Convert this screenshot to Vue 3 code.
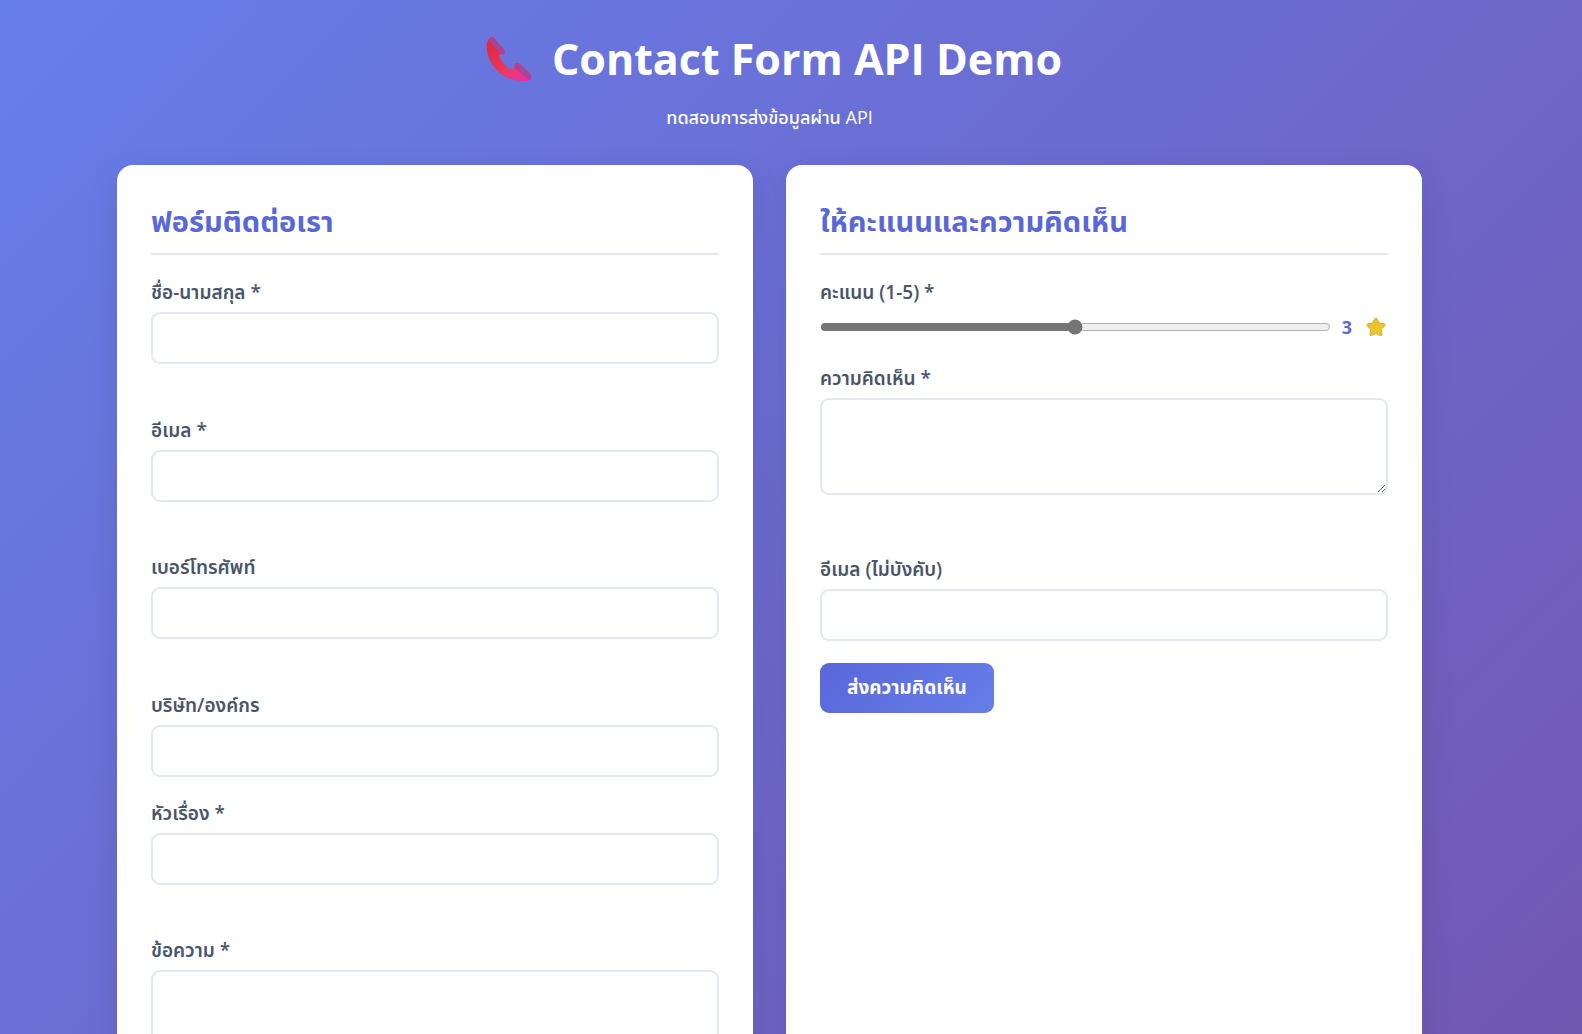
<script setup>
import { ref } from 'vue'

const rating = ref(3)
const contactFields = [
  { id: 'name', label: 'ชื่อ-นามสกุล *', type: 'text', error: true },
  { id: 'email', label: 'อีเมล *', type: 'email', error: true },
  { id: 'phone', label: 'เบอร์โทรศัพท์', type: 'tel', error: true },
  { id: 'company', label: 'บริษัท/องค์กร', type: 'text', error: false },
  { id: 'subject', label: 'หัวเรื่อง *', type: 'text', error: true },
]
</script>

<template>
  <div class="page">
    <div class="container">
      <header class="header">
        <h1>
          <svg class="phone" viewBox="0 0 46 46" aria-hidden="true">
            <defs>
              <linearGradient id="handle" x1="0" y1="0" x2="1" y2="1">
                <stop offset="0" stop-color="#d92c3c" />
                <stop offset="0.25" stop-color="#e62c46" />
                <stop offset="0.6" stop-color="#ea3a68" />
                <stop offset="1" stop-color="#f02aa8" />
              </linearGradient>
              <linearGradient id="cap" x1="0" y1="0" x2="1" y2="1">
                <stop offset="0" stop-color="#c03a86" />
                <stop offset="0.5" stop-color="#9a4a9c" />
                <stop offset="1" stop-color="#c23c92" />
              </linearGradient>
            </defs>
            <path fill="url(#handle)" d="M4 2C1 4 0 9 1 15C3 26 10 36 20 41C28 45 40 46 44 44C46 42 45 40 43 38L35 30C32 27 30 28 28 31C26 34 24 34 21 31C18 28 15 24 13 20C13 18 15 19 17 18C19 17 19 15 17 13L8 2C7 1 5 1 4 2Z" />
            <path fill="url(#cap)" d="M4 2C6 0 7 1 9 3L17 12C19 14 20 16 18 18C16 19 14 18 12 15L5 7C3 4 3 3 4 2Z" />
            <path fill="url(#cap)" d="M29 28C31 26 33 27 35 29L43 36C46 39 46 42 44 44C42 44 40 42 38 40L30 33C28 31 28 29 29 28Z" />
          </svg>
          <span>Contact Form API Demo</span>
        </h1>
        <p>ทดสอบการส่งข้อมูลผ่าน API</p>
      </header>

      <main class="cards">
        <section class="card">
          <h2>ฟอร์มติดต่อเรา</h2>
          <form @submit.prevent>
            <div v-for="f in contactFields" :key="f.id" class="group">
              <label :for="f.id">{{ f.label }}</label>
              <input :id="f.id" class="control" :type="f.type" />
              <div v-if="f.error" class="error"></div>
            </div>
            <div class="group">
              <label for="message">ข้อความ *</label>
              <textarea id="message" class="control message"></textarea>
            </div>
          </form>
        </section>

        <section class="card">
          <h2>ให้คะแนนและความคิดเห็น</h2>
          <form @submit.prevent>
            <div class="group">
              <label for="rating">คะแนน (1-5) *</label>
              <div class="rating">
                <input id="rating" v-model="rating" class="range" type="range" min="1" max="5" />
                <output for="rating">{{ rating }}</output>
                <svg class="star" viewBox="0 0 20 20" aria-hidden="true">
                  <defs>
                    <linearGradient id="gold" x1="0" y1="0" x2="1" y2="1">
                      <stop offset="0" stop-color="#e9b93a" />
                      <stop offset="0.5" stop-color="#ebc334" />
                      <stop offset="1" stop-color="#f5cb1c" />
                    </linearGradient>
                  </defs>
                  <path fill="url(#gold)" stroke="#e0ac30" stroke-width="1" stroke-linejoin="round" d="M8.600 1.800Q10 .2 11.200 1.800L13.200 6L18 6.800Q19.800 7.500 18.600 9L15.300 12.300L16 17.200Q16 19.200 14.200 18.600L9.900 16.400L5.600 18.600Q3.800 19 4 17.200L4.700 12.300L1.300 9Q.2 7.400 2 6.800L6.600 6Z" />
                </svg>
              </div>
            </div>
            <div class="group">
              <label for="comment">ความคิดเห็น *</label>
              <textarea id="comment" class="control comment"></textarea>
              <div class="error"></div>
            </div>
            <div class="group">
              <label for="feedback-email">อีเมล (ไม่บังคับ)</label>
              <input id="feedback-email" class="control" type="email" />
            </div>
            <button class="submit" type="submit">ส่งความคิดเห็น</button>
          </form>
        </section>
      </main>
    </div>
  </div>
</template>

<style>
body {
  margin: 0;
}
</style>

<style scoped>
* {
  box-sizing: border-box;
}
.page {
  min-height: 178vh;
  padding: 22px 65px 22px 22px;
  background: linear-gradient(135deg, #667eea 0%, #764ba2 100%);
  font-family: "Open Sans", "Noto Sans Thai", sans-serif;
  font-size: 18px;
  line-height: 1.6;
  color: #4a5568;
}
.container {
  max-width: 1305px;
  margin: 0 auto;
}
.header {
  display: flex;
  flex-direction: column;
  align-items: center;
  height: 143px;
  color: #fff;
}
h1 {
  display: flex;
  align-items: center;
  gap: 20px;
  margin: 0 0 8px;
  font-size: 43px;
  line-height: 73px;
}
.phone {
  width: 55px;
  height: 46px;
  padding-left: 9px;
}
.header p {
  margin: 0;
  line-height: 28px;
  font-weight: 500;
}
.cards {
  display: grid;
  grid-template-columns: 1fr 1fr;
  gap: 33px;
}
.card {
  padding: 34px;
  border-radius: 16px;
  background: #fff;
  box-shadow: 0 11px 33px rgba(0, 0, 0, 0.1);
}
h2 {
  margin: 0 0 23px;
  padding-bottom: 10px;
  border-bottom: 2px solid #e2e8f0;
  font-size: 29px;
  line-height: 44px;
  font-weight: 700;
  color: #5a67d8;
}
.group {
  margin-bottom: 22px;
}
label {
  display: block;
  margin-bottom: 5px;
  font-size: 19px;
  line-height: 29px;
  font-weight: 600;
}
.control {
  display: block;
  width: 100%;
  height: 52px;
  padding: 12px 14px;
  border: 2px solid #e2e8f0;
  border-radius: 9px;
  background: #fff;
  font: inherit;
  color: inherit;
}
.comment {
  height: 97px;
  margin-bottom: 12px;
}
.message {
  height: 140px;
}
.error {
  min-height: 1.6em;
  margin-top: 4px;
  font-size: 16px;
}
.rating {
  display: flex;
  align-items: center;
  height: 30px;
}
.range {
  flex: 1;
  min-width: 0;
  height: 18px;
  margin: 0 11px 0 0;
  accent-color: #757575;
}
output {
  margin-right: 14px;
  font-weight: 700;
  color: #5a67d8;
}
.star {
  width: 20px;
  height: 20px;
  margin-right: 2px;
}
.submit {
  height: 50px;
  padding: 0 27px;
  border: 0;
  border-radius: 9px;
  background: linear-gradient(135deg, #5a67d8, #667eea);
  font: inherit;
  font-size: 19px;
  font-weight: 700;
  color: #fff;
}
</style>
